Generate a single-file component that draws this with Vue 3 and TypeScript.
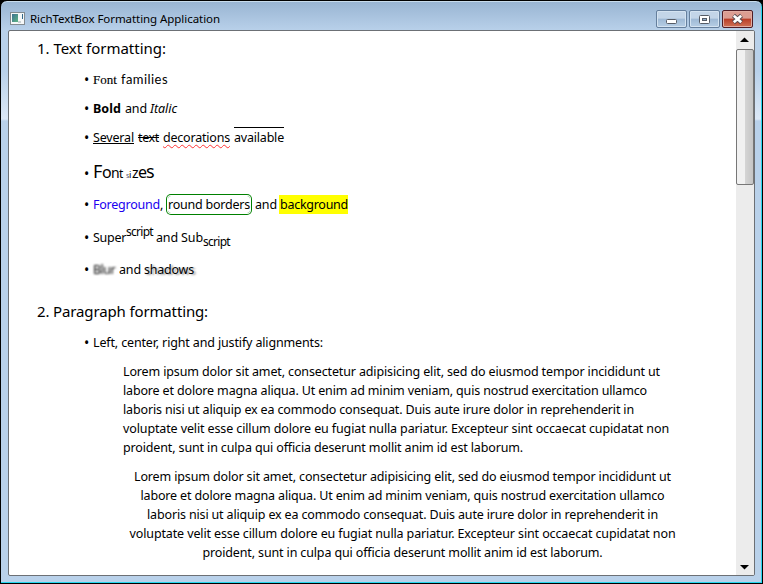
<script setup lang="ts">
import type { Directive } from 'vue'

interface Seg { t: string; w: number; gap?: number; c?: string }
interface Row { kind: string; h: number; segs: Seg[] }

/* Spreads a run of text over its given width by adjusting the tracking. */
const vFit: Directive<HTMLElement, number> = {
  mounted(el, { value }) {
    const natural = el.getBoundingClientRect().width
    const n = (el.textContent ?? '').length
    el.style.letterSpacing = `${(value - natural) / n}px`
  },
}

const rows: Row[] = [
  { kind: 'heading', h: 31, segs: [{ t: '1. Text formatting:', w: 129 }] },
  { kind: 'item', h: 29, segs: [{ t: 'Font', w: 24, gap: 4, c: 'serif' }, { t: 'families', w: 47, c: 'casual' }] },
  { kind: 'item', h: 29, segs: [{ t: 'Bold', w: 28, gap: 4, c: 'bold' }, { t: 'and', w: 22, gap: 3, c: '' }, { t: 'Italic', w: 27, c: 'italic' }] },
  { kind: 'item', h: 36, segs: [{ t: 'Several', w: 41, gap: 4, c: 'under' }, { t: 'text', w: 21, gap: 4, c: 'strike' }, { t: 'decorations', w: 67, gap: 4, c: 'squiggle' }, { t: 'available', w: 50, c: 'over' }] },
  { kind: 'item', h: 31, segs: [{ t: 'F', w: 9, c: 's18' }, { t: 'o', w: 9, c: 's16' }, { t: 'n', w: 8, c: 's14' }, { t: 't', w: 4, gap: 3, c: 's12' }, { t: 's', w: 3, c: 's7' }, { t: 'i', w: 3, c: 's10' }, { t: 'z', w: 6, c: 's14' }, { t: 'e', w: 8, c: 's16' }, { t: 's', w: 8, c: 's18' }] },
  { kind: 'item', h: 33, segs: [{ t: 'Foreground', w: 67, c: 'blue' }, { t: ',', w: 3, gap: 5 }, { t: 'round borders', w: 82, gap: 5, c: 'round' }, { t: 'and', w: 22, gap: 3 }, { t: 'background', w: 68, c: 'yellow' }] },
  { kind: 'item', h: 32, segs: [{ t: 'Super', w: 33, c: '' }, { t: 'script', w: 27, gap: 3, c: 'sup' }, { t: 'and', w: 22, gap: 3 }, { t: 'Sub', w: 22 }, { t: 'script', w: 27, c: 'sub' }] },
  { kind: 'item', h: 42, segs: [{ t: 'Blur', w: 22, gap: 4, c: 'blur' }, { t: 'and', w: 22, gap: 3 }, { t: 'shadows', w: 50, c: 'shadow' }] },
  { kind: 'heading', h: 31, segs: [{ t: '2. Paragraph formatting:', w: 171 }] },
  { kind: 'item', h: 29, segs: [{ t: 'Left, center, right and justify alignments:', w: 230 }] },
]

const lorem: Seg[] = [
  { t: 'Lorem ipsum dolor sit amet, consectetur adipisicing elit, sed do eiusmod tempor incididunt ut', w: 537 },
  { t: 'labore et dolore magna aliqua. Ut enim ad minim veniam, quis nostrud exercitation ullamco', w: 524 },
  { t: 'laboris nisi ut aliquip ex ea commodo consequat. Duis aute irure dolor in reprehenderit in', w: 511 },
  { t: 'voluptate velit esse cillum dolore eu fugiat nulla pariatur. Excepteur sint occaecat cupidatat non', w: 546 },
  { t: 'proident, sunt in culpa qui officia deserunt mollit anim id est laborum.', w: 400 },
]
</script>

<template>
  <div class="window">
    <header class="titlebar">
      <svg class="app-icon" width="16" height="14" viewBox="0 0 16 14">
        <defs>
          <linearGradient id="pane" x1="0" y1="0" x2="1" y2="1">
            <stop offset="0" stop-color="#3e7192" /><stop offset="1" stop-color="#5db584" />
          </linearGradient>
        </defs>
        <rect x="0.5" y="0.5" width="14" height="12" fill="#f6f8f8" stroke="#838b90" />
        <rect x="2" y="2" width="6" height="8" fill="url(#pane)" />
        <rect x="12" y="2" width="1" height="5" fill="#35698a" />
        <rect x="8" y="9" width="3" height="2" fill="#c8d0d2" />
      </svg>
      <span v-fit="190" class="title">RichTextBox Formatting Application</span>
      <div class="buttons">
        <button class="btn" aria-label="Minimize">
          <svg width="29" height="16"><rect x="9.5" y="8.5" width="10" height="4" rx="1" fill="#fff" stroke="#565c66" /></svg>
        </button>
        <button class="btn" aria-label="Maximize">
          <svg width="29" height="16"><rect x="9.5" y="4.5" width="10" height="8" rx="1" fill="#fff" stroke="#565c66" /><rect x="12.5" y="7.5" width="4" height="2" fill="#8fadcb" stroke="#565c66" /></svg>
        </button>
        <button class="btn close" aria-label="Close">
          <svg width="29" height="16"><path d="M10.5 4.5L18.5 11.5M18.5 4.5L10.5 11.5" stroke="#54494f" stroke-width="4.4" /><path d="M10.8 4.7L18.2 11.3M18.2 4.7L10.8 11.3" stroke="#fff" stroke-width="2.7" /></svg>
        </button>
      </div>
    </header>
    <main class="client">
      <div class="document">
        <div v-for="(row, i) in rows" :key="i" class="row" :class="row.kind" :style="{ height: row.h + 'px' }">
          <span v-if="row.kind === 'item'" class="bullet">•</span><span v-for="(s, j) in row.segs" :key="j" class="seg" :class="s.c" :style="{ width: s.w + 'px', marginRight: (s.gap ?? 0) + 'px' }"><span v-fit="s.w" class="run">{{ s.t }}</span></span>
        </div>
        <div class="para"><div v-for="l in lorem" :key="l.t" class="line"><span v-fit="l.w" class="run">{{ l.t }}</span></div></div>
        <div class="para center"><div v-for="l in lorem" :key="l.t" class="line"><span v-fit="l.w" class="run">{{ l.t }}</span></div></div>
      </div>
      <div class="scrollbar">
        <svg class="arrow" width="17" height="17"><path d="M4 11L8.5 6.5L13 11Z" fill="#000" /></svg>
        <div class="thumb"></div>
        <svg class="arrow down" width="17" height="17"><path d="M4 7L8.5 11.5L13 7Z" fill="#000" /></svg>
      </div>
    </main>
  </div>
</template>

<style>
body { background: #000; overflow: hidden; }
</style>
<style scoped>
* { box-sizing: border-box; }
.window { width: 763px; height: 584px; padding: 1px 7px 7px; border: 1px solid #000; border-radius: 7px 7px 0 0; background: linear-gradient(#98b4d2, #b9d1ea 30px, #b9d1ea 70px, #dce8f6 118px, #b9d1ea 120px); box-shadow: inset -1px -1px #27d7ef, inset 0 1px #c8dcec; font-family: "Noto Sans", "Open Sans", sans-serif; font-size: 12.5px; color: #000; }
.titlebar { display: flex; height: 28px; align-items: flex-start; padding: 0 0 0 2px; }
.app-icon { margin: 10px 4px 0 0; flex: none; }
.title { font-size: 11.5px; line-height: 18px; margin-top: 8px; white-space: nowrap; }
.buttons { display: flex; gap: 2px; margin: 8px 2px 0 auto; }
.btn { width: 31px; height: 18px; padding: 0; border: 1px solid #657f9d; border-radius: 2px; background: linear-gradient(#c3d5e8 45%, #9eb9d5 50%, #b7cee5); box-shadow: inset 0 0 0 1px #d4e3f1; }
.btn svg { display: block; }
.close { border-color: #501c25; background: linear-gradient(#dc9d92 45%, #b93d27 50%, #cf7256); box-shadow: inset 0 0 0 1px #e1aca2; }
.client { display: flex; width: 747px; height: 546px; border: 1px solid #6c7075; border-radius: 2px; background: #fff; overflow: hidden; }
.document { flex: 1; padding-top: 8px; }
.row { line-height: 19px; white-space: nowrap; }
.heading { padding-left: 28px; font-size: 15px; }
.item { padding-left: 75px; }
.bullet, .seg { display: inline-block; line-height: 19px; }
.bullet { width: 9px; font-size: 14px; line-height: 12px; vertical-align: -1px; }
.run { display: inline-block; white-space: pre; }
.serif { font-family: "Liberation Serif", serif; font-size: 13px; }
.serif .run { -webkit-text-stroke: 0.15px #000; }
.casual { font-family: Lato, sans-serif; font-size: 13px; }
.bold { font-weight: 700; }
.italic { font-style: italic; }
.under .run { height: 16px; border-bottom: 1px solid #000; }
.strike .run { text-decoration: line-through; }
.squiggle .run { text-decoration: underline wavy #f33 0.7px; text-underline-offset: 2px; }
.over { box-shadow: 0 -1px #000; }
.s18, .s16, .s14, .s12, .s10, .s7 { line-height: 12px; }
.s18 { font-size: 18px; }
.s16 { font-size: 16px; }
.s14 { font-size: 14px; }
.s12 { font-size: 12px; }
.s10 { font-size: 9px; }
.s7 { font-size: 7px; color: #557; }
.blue { color: #2000f0; }
.round { box-shadow: 0 0 0 1px #fff, 0 0 0 2px green; border-radius: 3px; }
.yellow { background: #ff0; box-shadow: -1px 0 #ff0; }
.sup { vertical-align: 6px; line-height: 5px; font-size: 12px; }
.sub { vertical-align: -4px; line-height: 10px; font-size: 12px; }
.blur { filter: blur(1.2px); }
.shadow { text-shadow: 2px 1px 2px #999; }
.para { width: 559px; margin: 0 0 10px 114px; }
.line { height: 19px; line-height: 19px; white-space: nowrap; }
.center { text-align: center; }
.scrollbar { display: flex; flex-direction: column; width: 18px; background: #ececec; }
.arrow { display: block; flex: none; }
.thumb { height: 136px; margin: 1px 0 auto; border: 1px solid #777; border-radius: 2px; background: linear-gradient(90deg, #f1f1f1 50%, #d5d5d5 50%, #c5c5c5); }
.round { height: 17px; line-height: 17px; }
</style>
